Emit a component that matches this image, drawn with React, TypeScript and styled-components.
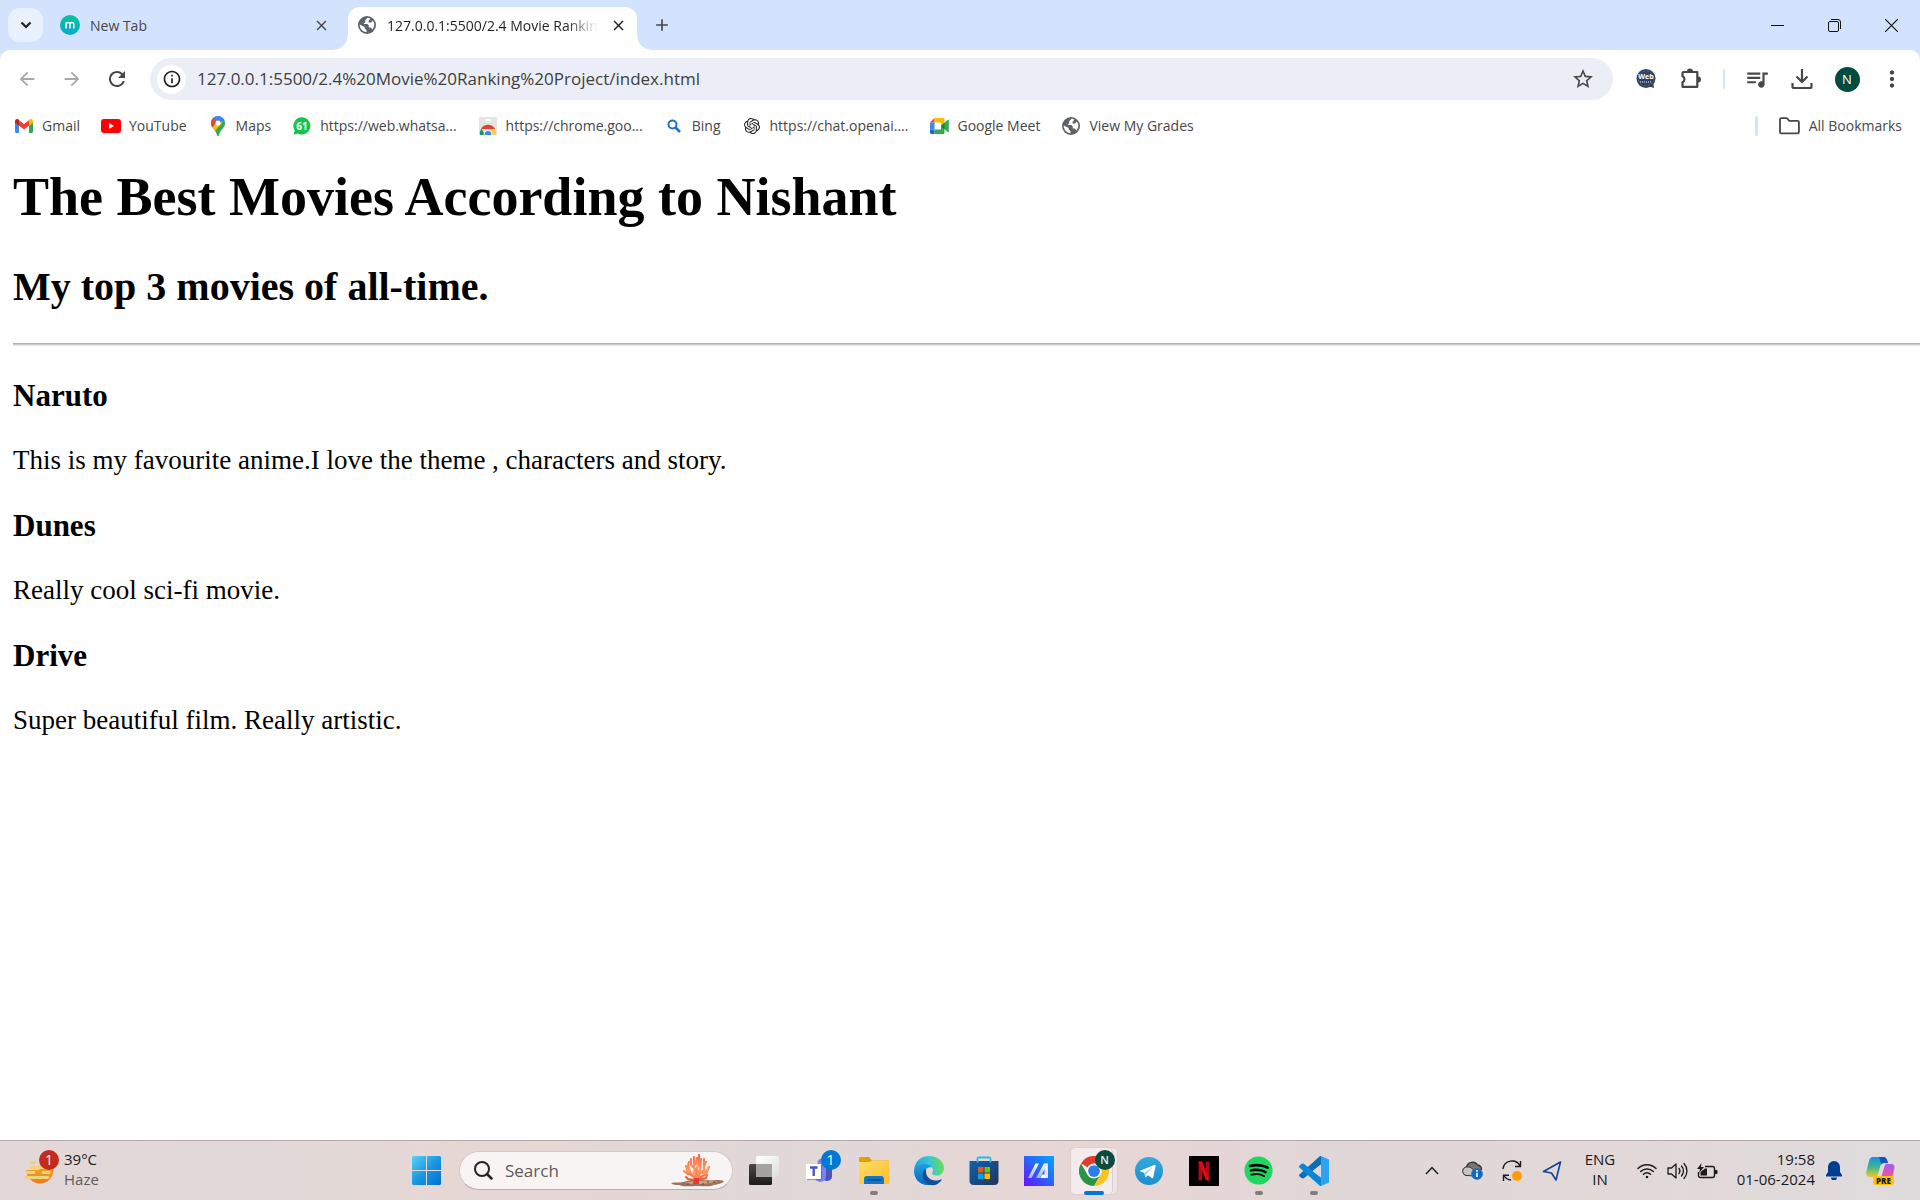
import React from "react";
import styled, { createGlobalStyle, css } from "styled-components";
import {
  MdArrowBack,
  MdArrowForward,
  MdRefresh,
  MdStarBorder,
  MdQueueMusic,
  MdMoreVert,
  MdInfoOutline,
  MdClose,
  MdAdd,
} from "react-icons/md";
import { SiOpenai } from "react-icons/si";
import { FaSpotify } from "react-icons/fa";

const ui = `"Open Sans", "Noto Sans", sans-serif`;
const serif = `"Liberation Serif", "Times New Roman", serif`;

const GlobalStyle = createGlobalStyle`
  * { box-sizing: border-box; }
  body { margin: 0; background: #fff; }
  button, input { font: inherit; color: inherit; }
`;

const Screen = styled.div`
  min-height: 100vh;
  display: flex;
  flex-direction: column;
  overflow-x: hidden;
  font-family: ${ui};
  color: #474747;
`;

const PlainButton = styled.button`
  display: flex;
  align-items: center;
  justify-content: center;
  padding: 0;
  border: 0;
  background: none;
  cursor: default;
  flex: none;
`;

/* ---------- Tab strip ---------- */

const TabStrip = styled.header`
  display: flex;
  align-items: center;
  gap: 8px;
  height: 50px;
  padding-left: 8px;
  background: #d3e3fd;
`;

const TabSearch = styled(PlainButton)`
  width: 35px;
  height: 34px;
  border-radius: 12px;
  background: #e9f1fe;
  color: #1f1f1f;
`;

const Tab = styled.div<{ $active?: boolean }>`
  position: relative;
  display: flex;
  align-items: center;
  gap: 10px;
  width: 289px;
  height: 43px;
  align-self: flex-end;
  padding: 0 9px 7px;
  font-size: 14px;
  color: #474747;
  ${(p) =>
    p.$active &&
    css`
      background: #fff;
      color: #1f1f1f;
      border-radius: 12px 12px 0 0;
      &::before,
      &::after {
        content: "";
        position: absolute;
        bottom: 0;
        width: 14px;
        height: 14px;
      }
      &::before {
        right: 100%;
        background: radial-gradient(circle at 0 0, #d3e3fd 13px, #fff 14px);
      }
      &::after {
        left: 100%;
        background: radial-gradient(circle at 100% 0, #d3e3fd 13px, #fff 14px);
      }
    `}
`;

const TabTitle = styled.span<{ $fade?: boolean }>`
  flex: 1;
  min-width: 0;
  overflow: hidden;
  white-space: nowrap;
  ${(p) => p.$fade && "mask-image: linear-gradient(90deg, #000 85%, transparent);"}
`;

const TabClose = styled(PlainButton)`
  width: 20px;
  height: 20px;
`;

const NewTab = styled(PlainButton)`
  width: 34px;
  height: 34px;
`;

const WindowControls = styled.div`
  display: flex;
  align-self: stretch;
  margin-left: auto;
`;

const WindowButton = styled(PlainButton)`
  width: 57px;
  color: #111;
`;

/* ---------- Toolbar ---------- */

const ToolbarBack = styled.div`
  background: #d3e3fd;
`;

const Toolbar = styled.nav`
  display: flex;
  align-items: center;
  gap: 5px;
  height: 58px;
  padding: 0 8px 0 7px;
  background: #fff;
  border-radius: 10px 10px 0 0;
`;

const ToolButton = styled(PlainButton)<{ $dim?: boolean }>`
  width: 40px;
  height: 40px;
  color: ${(p) => (p.$dim ? "#a9a9a9" : "#474747")};
`;

const Omnibox = styled.div`
  flex: 1;
  min-width: 0;
  display: flex;
  align-items: center;
  height: 42px;
  margin: 0 8px;
  padding: 0 10px 0 7px;
  border-radius: 21px;
  background: #ebeef7;
`;

const SiteInfo = styled(PlainButton)`
  width: 29px;
  height: 29px;
  margin-right: 11px;
  border-radius: 50%;
  background: #fff;
  color: #1f1f1f;
`;

const AddressInput = styled.input`
  flex: 1;
  min-width: 0;
  padding: 0;
  border: 0;
  outline: 0;
  background: transparent;
  font-size: 17px;
  line-height: 24px;
  color: #404040;
`;

const Divider = styled.span<{ $thick?: boolean }>`
  flex: none;
  width: ${(p) => (p.$thick ? 3 : 2)}px;
  height: 20px;
  margin: 0 ${(p) => (p.$thick ? 0 : 7)}px;
  border-radius: 2px;
  background: #d3e3fd;
`;

const Avatar = styled.span`
  display: grid;
  place-items: center;
  width: 25px;
  height: 25px;
  border-radius: 50%;
  background: #004d40;
  color: #fff;
  font-size: 13px;
`;

/* ---------- Bookmarks ---------- */

const BookmarkBar = styled.nav`
  display: flex;
  align-items: center;
  gap: 21px;
  height: 36px;
  padding: 0 18px 0 14px;
`;

const BookmarkLink = styled.a`
  display: flex;
  align-items: center;
  gap: 8px;
  font-size: 14px;
  line-height: 20px;
  color: #474747;
  text-decoration: none;
  white-space: nowrap;
`;

const IconSlot = styled.span`
  display: grid;
  place-items: center;
  width: 20px;
  height: 20px;
  flex: none;
`;

const AllBookmarks = styled(PlainButton)`
  gap: 9px;
  font-size: 14px;
  line-height: 20px;
`;

const Spacer = styled.span`
  flex: 1;
`;

/* ---------- Page ---------- */

const Page = styled.main`
  flex: 1;
  padding: 23px 0 0 13px;
  font-family: ${serif};
  color: #000;
`;

const Title = styled.h1`
  margin: 0 0 36px;
  font-size: 54px;
  line-height: 60px;
`;

const Subtitle = styled.h2`
  margin: 0 0 32px;
  font-size: 40px;
  line-height: 48px;
`;

const Rule = styled.hr`
  height: 3px;
  margin: 0 0 32px;
  border: 0;
  border-top: 1px solid #b0b0b0;
  border-bottom: 1px solid #e9e9e9;
  background: #cecece;
`;

const MovieName = styled.h3`
  margin: 0 0 30px;
  font-size: 31px;
  line-height: 36px;
`;

const MovieText = styled.p`
  margin: 0 0 32px;
  font-size: 27px;
  line-height: 32px;
`;

/* ---------- Taskbar ---------- */

const Taskbar = styled.footer`
  display: flex;
  align-items: center;
  height: 60px;
  border-top: 1px solid #b1a9a9;
  background: linear-gradient(90deg, #e4d7d7, #e0d9d8 12%, #e6d7d4 25%, #e0d8d7 40%, #e8d6d6 58%, #e1d7d7 70%, #e2d8d8 85%, #dfdbdd);
  color: #1b1b1b;
  font-size: 15px;
  line-height: 20px;
`;

const Weather = styled(PlainButton)`
  justify-content: flex-start;
  gap: 10px;
  width: 399px;
  padding-left: 24px;
  text-align: left;
`;

const IconStack = styled.span`
  position: relative;
  display: grid;
`;

const CountBadge = styled.span<{ $color: string; $x: number; $y: number }>`
  position: absolute;
  left: ${(p) => p.$x}px;
  top: ${(p) => p.$y}px;
  display: grid;
  place-items: center;
  width: 20px;
  height: 20px;
  border-radius: 50%;
  background: ${(p) => p.$color};
  color: #fff;
  font-size: 14px;
`;

const Stack = styled.span<{ $align?: string }>`
  display: flex;
  flex-direction: column;
  align-items: ${(p) => p.$align || "flex-start"};
  padding-bottom: 4px;
`;

const Muted = styled.span`
  color: #605a5a;
`;

const AppSlot = styled(PlainButton)`
  position: relative;
  width: 55px;
  height: 48px;
`;

const RunningMark = styled.span<{ $active?: boolean }>`
  position: absolute;
  bottom: 0;
  left: 50%;
  width: ${(p) => (p.$active ? 20 : 8)}px;
  height: 4px;
  margin-left: ${(p) => (p.$active ? -10 : -4)}px;
  border-radius: 2px;
  background: ${(p) => (p.$active ? "#0078d4" : "#857c7c")};
`;

const ActiveCard = styled.span`
  position: relative;
  display: grid;
  place-items: center;
  width: 48px;
  height: 48px;
  border-radius: 5px;
  background: #f0e4e4;
  border: 1px solid #dccfcf;
  &::before {
    content: "";
    position: absolute;
    inset: -1px 4px -1px -1px;
    border-radius: 5px;
    border: 1px solid #dccfcf;
    background: #f4ecec;
  }
  svg {
    position: relative;
  }
`;

const SearchBox = styled.label`
  display: flex;
  align-items: center;
  width: 274px;
  height: 39px;
  margin: 0 3px 0 5px;
  padding: 0 7px 0 14px;
  border: 1px solid #d5c8c6;
  border-bottom-color: #b9adab;
  border-radius: 20px;
  background: #f8f4f3;
`;

const SearchInput = styled.input`
  flex: 1;
  min-width: 0;
  margin-left: 12px;
  padding: 0;
  border: 0;
  outline: 0;
  background: transparent;
  font-size: 17px;
  &::placeholder {
    color: #5f5b5a;
    opacity: 1;
  }
`;

const Tray = styled.div`
  display: flex;
  align-items: center;
  margin-left: auto;
  padding-right: 11px;
`;

const TrayButton = styled(PlainButton)<{ $w: number }>`
  width: ${(p) => p.$w}px;
  height: 48px;
`;

const QuickSettings = styled(PlainButton)`
  height: 48px;
  padding-left: 4px;
`;

const QuickIcon = styled.span`
  display: grid;
  place-items: center;
  width: 30px;
`;

const Clock = styled(PlainButton)`
  width: 93px;
  justify-content: flex-end;
`;

/* ---------- Drawings ---------- */

const MIcon = () => (
  <svg width="20" height="20" viewBox="0 0 20 20">
    <defs>
      <linearGradient id="mg" x1="0" y1="0" x2="0" y2="1">
        <stop offset="0" stopColor="#06c49a" />
        <stop offset="1" stopColor="#08a7d2" />
      </linearGradient>
    </defs>
    <circle cx="10" cy="10" r="10" fill="url(#mg)" />
    <path d="M6.200 13.500V7.300m0 2.200c0-2.600 3.800-2.600 3.800 0v4m0-4c0-2.600 3.800-2.600 3.800 0v4" fill="none" stroke="#fff" strokeWidth="1.500" />
  </svg>
);

const Globe = () => (
  <svg width="18" height="18" viewBox="0 0 18 18">
    <circle cx="9" cy="9" r="9" fill="#5f6368" />
    <path d="M9.600 1.800 7.200 4.300v1.900L5.400 8h4l1.400 1.500v2h1.900l1.800 1.900A7.300 7.300 0 0 0 14.800 4.600l-1.600 2h-2.600V4.800l1.800-2.100a7.300 7.300 0 0 0-2.800-.9z" fill="#fff" />
    <path d="M1.700 8.400A7.300 7.300 0 0 0 8.600 16.300v-2.100l-1.900-1.600v-1.500z" fill="#fff" />
  </svg>
);

const Gmail = () => (
  <svg width="18" height="14" viewBox="0 0 18 14">
    <path d="M0 1.800V12.600c0 .8.500 1.400 1.300 1.400H4V5.800z" fill="#4285f4" />
    <path d="M18 1.800V12.600c0 .8-.5 1.400-1.300 1.400H14V5.800z" fill="#34a853" />
    <path d="M14 1.400v5.400l4-3V2.200C18 .2 15.800-.6 14.400.5z" fill="#fbbc04" />
    <path d="M4 6.800V1.200l5 3.800 5-3.800v5.600l-5 3.800z" fill="#ea4335" />
    <path d="M0 2.200v1.600l4 3V1.200L3.600.5C2.200-.6 0 .2 0 2.200z" fill="#c5221f" />
  </svg>
);

const YouTube = () => (
  <svg width="20" height="14" viewBox="0 0 20 14">
    <rect width="20" height="14" rx="3" fill="#f00" />
    <path d="M8 4v6l5-3z" fill="#fff" />
  </svg>
);

const MapPin = () => (
  <svg width="14" height="20" viewBox="0 0 14 20">
    <defs>
      <clipPath id="pin">
        <path d="M7 0a7 7 0 0 1 7 7c0 5-4.500 6.500-5.800 11.500C8 19.400 7.700 20 7 20s-1-.6-1.200-1.500C4.500 13.500 0 12 0 7a7 7 0 0 1 7-7z" />
      </clipPath>
    </defs>
    <g clipPath="url(#pin)">
      <rect width="14" height="20" fill="#34a853" />
      <path d="M0 13 11 0v7L3 16z" fill="#fbbc04" />
      <path d="M4 0h10v4.500L7 7 2 2z" fill="#4285f4" />
      <path d="M0 2 1.800 1.500 6 5.500 1 11H0z" fill="#ea4335" />
    </g>
    <circle cx="7" cy="7" r="2.600" fill="#fff" />
  </svg>
);

const WhatsApp = () => (
  <svg width="18" height="18" viewBox="0 0 18 18">
    <path d="M9 .3a8.600 8.600 0 1 1-4.200 16.200L.5 17.700l1.200-4.200A8.600 8.600 0 0 1 9 .3z" fill="#16c448" />
    <text x="9" y="12.600" fontSize="10" fontWeight="700" textAnchor="middle" fill="#fff" fontFamily={ui}>61</text>
  </svg>
);

const ChromeMark = ({ size }: { size: number }) => (
  <svg width={size} height={size} viewBox="0 0 48 48">
    <path d="M24 24 3.200 12A24 24 0 0 1 44.800 12z" fill="#e33b2e" />
    <path d="M3.200 12A24 24 0 0 0 24 48l10.400-18L24 24 13.600 30z" fill="#2a9446" />
    <path d="M44.800 12A24 24 0 0 1 24 48l10.400-18A12 12 0 0 0 34 16.500L24 12z" fill="#fcc31e" />
    <circle cx="24" cy="24" r="12" fill="#fff" />
    <circle cx="24" cy="24" r="9.400" fill="#2f7de9" />
  </svg>
);

const WebStore = () => (
  <svg width="18" height="18" viewBox="0 0 18 18">
    <rect width="18" height="18" fill="#e4e4e4" />
    <rect x="6" y="2" width="6" height="2" rx="1" fill="#fff" />
    <path d="M2 12a8 8 0 0 1 14 0z" fill="#db4437" />
    <path d="M1 18a8 8 0 0 1 1.500-6.500L6 18z" fill="#0f9d58" />
    <path d="M9 12h7a8 8 0 0 1 1 6h-5z" fill="#ffcd40" />
    <path d="M4.500 18a4.500 5 0 0 1 9 0z" fill="#fff" />
    <path d="M5.500 18a3.500 4 0 0 1 7 0z" fill="#4285f4" />
  </svg>
);

const BlueSearch = () => (
  <svg width="14" height="14" viewBox="0 0 14 14" fill="none" stroke="#1a73c8" strokeWidth="2">
    <circle cx="5.500" cy="5.500" r="4" />
    <path d="m8.500 8.500 4.500 4.500" strokeWidth="2.500" />
  </svg>
);

const Meet = () => (
  <svg width="19" height="16" viewBox="0 0 19 16">
    <path d="M4.500 0v4.500H0z" fill="#ea4335" />
    <path d="M0 4.500h4.500v7H0z" fill="#4285f4" />
    <path d="M0 11.500h4.500V16H1.500C.6 16 0 15.400 0 14.500z" fill="#1967d2" />
    <path d="M4.500 0H13c.9 0 1.500.6 1.500 1.500V6L11 8V4.500H4.500z" fill="#fbbc04" />
    <path d="M4.500 16H13c.9 0 1.500-.6 1.500-1.500V10L11 8v3.500H4.500z" fill="#34a853" />
    <path d="M11 8l6.500-6c.5-.4 1.300 0 1.300.7v10.600c0 .7-.8 1.100-1.300.7z" fill="#34a853" />
    <path d="m11 8 3.500-3.200v6.400z" fill="#188038" />
  </svg>
);

const WebChat = () => (
  <svg width="20" height="20" viewBox="0 0 20 20">
    <circle cx="10" cy="9.500" r="9.500" fill="#33415f" />
    <path d="m12 17 6 2-1-6z" fill="#33415f" />
    <circle cx="10" cy="9.500" r="7.500" fill="none" stroke="#4f6f8f" strokeWidth="1" strokeDasharray="2 2" />
    <text x="10" y="10" fontSize="7" fontWeight="700" textAnchor="middle" fill="#fff" fontFamily={ui}>Web</text>
    <path d="M4 13h12" stroke="#a9bdd0" strokeWidth="1.500" strokeDasharray="1 1" />
  </svg>
);

const Puzzle = () => (
  <svg width="24" height="24" viewBox="0 0 24 24">
    <path d="M4.500 5h13.800v14.800H3.500v-4.500a3.300 3.300 0 0 0 0-6V6c0-.6.400-1 1-1z" fill="none" stroke="#474747" strokeWidth="2.200" strokeLinejoin="round" />
    <path d="M8 4.500a3 3 0 0 1 6 0zM19 9.400a3 3 0 0 1 0 6z" fill="#474747" />
  </svg>
);

const Folder = () => (
  <svg width="21" height="18" viewBox="0 0 21 18" fill="none" stroke="#474747" strokeWidth="1.800" strokeLinejoin="round">
    <path d="M1 2.500C1 1.700 1.600 1.200 2.300 1.200h5.500l2.500 2.600h8.200c.8 0 1.400.5 1.400 1.300v10c0 .8-.6 1.300-1.400 1.300H2.300c-.7 0-1.300-.5-1.300-1.300z" />
  </svg>
);

const Download = () => (
  <svg width="22" height="22" viewBox="0 0 22 22" fill="none" stroke="#474747" strokeWidth="2.200">
    <path d="M11 1v12.500M5.500 8.500 11 14l5.500-5.500M1.500 15v3.500c0 1 .5 1.500 1.500 1.500h16c1 0 1.500-.5 1.500-1.500V15" />
  </svg>
);

const Haze = () => (
  <svg width="30" height="30" viewBox="0 0 30 30">
    <defs>
      <linearGradient id="sun" x1="0" y1="0" x2="0" y2="1">
        <stop offset="0" stopColor="#f6c02d" />
        <stop offset="1" stopColor="#ef7a1a" />
      </linearGradient>
    </defs>
    <circle cx="16" cy="14" r="13.500" fill="url(#sun)" />
    <path d="M0 0h30v9H16l-1 5H0z" fill="#e3d8d8" />
    <g stroke="#f3d27a" strokeWidth="2.800" strokeLinecap="round">
      <path d="M7 6.500h4M7 11.500h14M3 16.500h7M19 16.500h6M2 21.500h22" />
    </g>
    <path d="M3 19h22" stroke="#d79d2f" strokeWidth="1.800" />
  </svg>
);

const WindowsLogo = () => (
  <svg width="29" height="29" viewBox="0 0 29 29">
    <defs>
      <linearGradient id="win" x1="0" y1="0" x2="29" y2="29" gradientUnits="userSpaceOnUse">
        <stop offset="0" stopColor="#52d3fb" />
        <stop offset=".5" stopColor="#1a98e2" />
        <stop offset="1" stopColor="#0070d0" />
      </linearGradient>
    </defs>
    <path d="M1 0h13v14H0V1zM15 0h13l1 1v13H15zM0 15h14v14H1l-1-1zM15 15h14v13l-1 1H15z" fill="url(#win)" />
  </svg>
);

const Magnifier = () => (
  <svg width="19" height="19" viewBox="0 0 19 19" fill="none" stroke="#252525" strokeWidth="2">
    <circle cx="8" cy="8" r="7" />
    <path d="m13 13 4.500 4.500" strokeWidth="2.500" strokeLinecap="round" />
  </svg>
);

const Coral = () => (
  <svg width="55" height="34" viewBox="0 0 55 34">
    <defs>
      <linearGradient id="coral" x1="0" y1="0" x2="0" y2="28" gradientUnits="userSpaceOnUse">
        <stop offset="0" stopColor="#f06a4e" />
        <stop offset=".6" stopColor="#ff9a5e" />
        <stop offset="1" stopColor="#e8432f" />
      </linearGradient>
    </defs>
    <path d="M1 29c4-1 8 0 12-1 5-1 9-3 15-2 6-1 12 1 17 0 4 0 7 0 9 1-2 3-6 3-10 4-4 2-11 1-16 1-8 0-15 1-19-1-3 0-6 0-8-2z" fill="#9c7360" />
    <path d="M14 29c8-2 20-3 34-2-7 3-22 4-34 2z" fill="#c9a283" />
    <g fill="none" stroke="url(#coral)" strokeWidth="2.200" strokeLinecap="round" strokeLinejoin="round">
      <path d="M26 29V16l-5-5V5M26 16l3-6V1M27 22l7-6V5M26 24l-8-5-2-7M27 25l9-5 3-7M24 14V3M30 18l1-13M21 20l-3-8 1-4M33 19l5-4M18 20l-4-3M26 26l-8-1-2-2M28 26l8-2 1-3M36 8l-2 4M26 10l1-6" />
    </g>
    <path d="M22 19c2-6 6-6 9-1l-2 10h-5z" fill="#ff8a55" opacity=".8" />
    <path d="M24 24h5v6h-6z" fill="#e23a31" />
    <g fill="#523a31">
      <circle cx="18" cy="30" r=".8" /><circle cx="33" cy="30" r=".8" /><circle cx="38" cy="28" r=".8" /><circle cx="44" cy="28" r=".8" />
    </g>
  </svg>
);

const TaskView = () => (
  <svg width="30" height="29" viewBox="0 0 30 29">
    <defs>
      <linearGradient id="tvd" x1="0" y1="0" x2="0" y2="1"><stop offset="0" stopColor="#4a4947" /><stop offset="1" stopColor="#1c1c1c" /></linearGradient>
      <linearGradient id="tvl" x1="0" y1="0" x2="1" y2="1"><stop offset="0" stopColor="#fff" /><stop offset="1" stopColor="#dedede" /></linearGradient>
    </defs>
    <rect x="7" y="0" width="23" height="21" rx="1.500" fill="url(#tvl)" />
    <rect x="0" y="8" width="23" height="21" rx="1.500" fill="url(#tvd)" />
    <rect x="7" y="8" width="16" height="13" fill="#a5a3a2" />
  </svg>
);

const Teams = () => (
  <svg width="30" height="30" viewBox="2 0 30 30" overflow="visible">
    <g transform="translate(4 0)">
      <path d="M17 10h9v10a5 5 0 0 1-9 3z" fill="#4b53bc" />
      <circle cx="16" cy="7" r="4.500" fill="#7b83eb" />
      <path d="M9 11h11v10a6 6 0 0 1-11 2z" fill="#7b83eb" />
      <rect x="1" y="9" width="15" height="15" fill="#4a4fa5" opacity=".5" />
      <rect x="0" y="8" width="15" height="15" fill="#fff" />
      <path d="M4 11.500h7.500M7.700 11.500v8.500" stroke="#4b53bc" strokeWidth="2.300" />
    </g>
  </svg>
);

const Explorer = () => (
  <svg width="30" height="28" viewBox="0 0 30 28">
    <defs>
      <linearGradient id="fold" x1="0" y1="0" x2="1" y2="1"><stop offset="0" stopColor="#ffdc65" /><stop offset="1" stopColor="#fcbf2b" /></linearGradient>
    </defs>
    <path d="M0 1.500C0 .7.500 0 1.500 0H10l3 3.500H30V10H0z" fill="#e0a008" />
    <path d="M0 5h10.500L13 3.500h17V27H1c-.6 0-1-.4-1-1z" fill="url(#fold)" />
    <path d="M5 27v-5a3 3 0 0 1 3-3h14a3 3 0 0 1 3 3v5z" fill="#0f77c6" />
    <path d="M9 23h13" stroke="#0a4d87" strokeWidth="1.300" strokeLinecap="round" />
  </svg>
);

const Edge = () => (
  <svg width="30" height="30" viewBox="0 0 30 30">
    <defs>
      <linearGradient id="e1" x1="0" y1=".4" x2="1" y2=".3"><stop offset="0" stopColor="#279fdf" /><stop offset=".5" stopColor="#38c4d6" /><stop offset="1" stopColor="#6be14c" /></linearGradient>
      <linearGradient id="e2" x1="0" y1="0" x2="0" y2="1"><stop offset="0" stopColor="#1ba0e2" /><stop offset="1" stopColor="#0c62c0" /></linearGradient>
    </defs>
    <path d="M0 14C1 5 7 0 15 0c9 0 15 6 15 12 0 5-3.500 7.500-7 7.500-3 0-5-1-5-2 0-.8 1-1 1-3.500C19 11 15 9 10.500 9 5.500 9 1.500 11 0 14z" fill="url(#e1)" />
    <path d="M0 15c.5-4 5-7 10-7 4 0 6.500 1.500 8 3.500-4-1-7 1.500-7 5.500 0 6 5 10 10 9.500-9 6.500-21 0-21-11.500z" fill="url(#e2)" />
    <path d="M12 12.500c-4 3-4.500 9-1 13 4 5 11.500 5 16-.5.600-.8.800-1.500.5-1.800-.4-.4-2.500 1.300-6 1.300-6 0-10.500-4.500-9.500-12z" fill="#124f96" />
  </svg>
);

const Store = () => (
  <svg width="30" height="30" viewBox="0 0 30 30">
    <defs>
      <linearGradient id="st" x1="0" y1="0" x2="1" y2="1"><stop offset="0" stopColor="#0d64ae" /><stop offset="1" stopColor="#233455" /></linearGradient>
    </defs>
    <path d="M.5 5h29v20c0 2-1.500 4-4 4h-21c-2.500 0-4-2-4-4z" fill="url(#st)" />
    <path d="M8.500 6.500V2.500c0-.6.300-1 1-1h11c.7 0 1 .4 1 1v4" fill="none" stroke="#28b9ec" strokeWidth="1.800" />
    <path d="M9 11h5.500v5.500H9z" fill="#f25022" />
    <path d="M15.500 11H21v5.500h-5.500z" fill="#7fba00" />
    <path d="M9 17.500h5.500V23H9z" fill="#00a4ef" />
    <path d="M15.500 17.500H21V23h-5.500z" fill="#ffb900" />
  </svg>
);

const MyAsus = () => (
  <svg width="30" height="30" viewBox="0 0 30 30">
    <defs>
      <linearGradient id="as" x1="0" y1="1" x2="1" y2="0"><stop offset="0" stopColor="#6a10ff" /><stop offset=".5" stopColor="#2a63fa" /><stop offset="1" stopColor="#02a8ff" /></linearGradient>
      <linearGradient id="bar" x1="0" y1="0" x2="0" y2="1"><stop offset="0" stopColor="#fff" /><stop offset="1" stopColor="#9fb0fb" /></linearGradient>
    </defs>
    <path d="M0 0h30v30H0z" fill="url(#as)" />
    <path d="M11.500 7.500h3.500L7.500 22H4zM20 7.500h3.500L16 22h-4z" fill="url(#bar)" />
    <path d="M20.500 7.500H24V22h-3.500z" fill="#e3edff" />
    <path d="M18 18.500h3V22h-4.500z" fill="#fff" />
  </svg>
);

const Telegram = () => (
  <svg width="28" height="28" viewBox="0 0 28 28">
    <defs><linearGradient id="tg" x1="0" y1="0" x2="0" y2="1"><stop offset="0" stopColor="#33a9de" /><stop offset="1" stopColor="#1c8fd0" /></linearGradient></defs>
    <circle cx="14" cy="14" r="14" fill="url(#tg)" />
    <path d="m5.500 13.600 13.700-5.500c1-.4 1.600.2 1.400 1.200l-2.300 10.900c-.2 1-.8 1.200-1.600.7l-3.700-2.700-1.900 1.800c-.3.3-.6.4-.8-.3l-1.100-4-3.600-1.100c-.8-.2-.8-.7-.1-1z" fill="#fff" />
    <path d="m9.500 15.500 8-5-6.300 6.500-.4 2.800z" fill="#a8cfe8" />
  </svg>
);

const Netflix = () => (
  <svg width="30" height="30" viewBox="0 0 30 30">
    <path d="M0 0h30v30H0z" />
    <path d="M9.500 5.500h3.700V24l-3.700.6zM16.800 5.500h3.700v19l-3.700-.6z" fill="#b00710" />
    <path d="M9.500 5.500h3.700l7.300 19-3.700-.5z" fill="#e50914" />
  </svg>
);

const VsCode = () => (
  <svg width="30" height="30" viewBox="0 0 30 30">
    <path d="M22 0 30 3.500v23L22 30z" fill="#2ba4ee" />
    <path d="M22 0v8.500L4.500 22.500 2.500 22 .4 20.200c-.5-.5-.5-1.200 0-1.600L20.500.5C21 .1 21.500 0 22 0z" fill="#0a6db5" />
    <path d="M22 30v-8.500L4.500 7.500l-2 .3L.4 9.800c-.5.5-.5 1.200 0 1.600l20.100 18.100c.5.4 1 .5 1.500.5z" fill="#0b87d4" />
    <path d="M22 8.500v13L13.500 15z" fill="#e3d8d8" />
  </svg>
);

const Cloud = () => (
  <svg width="21" height="19" viewBox="0 0 21 19">
    <path d="M5 14.500a4.300 4.300 0 0 1-.5-8.400A6 6 0 0 1 15.500 4c3 .3 4 2.500 4 5" fill="#777" stroke="#333" strokeWidth="1.300" />
    <path d="M5 14.500a4.300 4.300 0 0 1 0-8.600c4 0 6 2 9 6l-3 3z" fill="#c9c4c4" stroke="#333" strokeWidth="1" />
    <circle cx="15" cy="13" r="5.800" fill="#0f6cbd" />
    <path d="M15 11.800V16M15 9v1.700" stroke="#fff" strokeWidth="1.600" />
  </svg>
);

const Sync = () => (
  <svg width="22" height="22" viewBox="0 0 22 22" fill="none" stroke="#1b1b1b" strokeWidth="1.400">
    <path d="M2 9A9 9 0 0 1 19 6M19.500 1v5.500H14M10 20a9 9 0 0 1-7-4.500M2.500 21v-5.700H8" />
    <circle cx="16" cy="16" r="5" fill="#ff9a0b" stroke="none" />
  </svg>
);

const Location = () => (
  <svg width="20" height="20" viewBox="0 0 20 20" fill="none" stroke="#0b4596" strokeWidth="1.600" strokeLinejoin="round">
    <path d="M18.500 1 1.500 10.500 9.500 12l4.500 7z" />
  </svg>
);

const Wifi = () => (
  <svg width="20" height="16" viewBox="0 0 20 16" fill="none" stroke="#1b1b1b" strokeWidth="1.500" strokeLinecap="round">
    <path d="M1 5.500a12.500 12.500 0 0 1 18 0M3.700 8.500a9 9 0 0 1 12.600 0M6.500 11.300a5 5 0 0 1 7 0" />
    <circle cx="10" cy="14" r="1.300" fill="#1b1b1b" stroke="none" />
  </svg>
);

const Volume = () => (
  <svg width="21" height="18" viewBox="0 0 21 18" fill="none" stroke="#1b1b1b" strokeWidth="1.300" strokeLinejoin="round" strokeLinecap="round">
    <path d="M1 6h3.500L9 2v14l-4.500-4H1zM12 6.500a4 4 0 0 1 0 5M14.500 4a7.500 7.500 0 0 1 0 10M17 1.500a11 11 0 0 1 0 15" />
  </svg>
);

const Battery = () => (
  <svg width="21" height="16" viewBox="0 0 21 16">
    <path d="M8 3.500h7.500A2 2 0 0 1 17.500 5.500v7a2 2 0 0 1-2 2h-12a2 2 0 0 1-2-2V9" fill="none" stroke="#1b1b1b" strokeWidth="1.400" />
    <path d="M18 7h1.500c.6 0 1 .4 1 1v2c0 .6-.4 1-1 1H18z" fill="#1b1b1b" />
    <path d="M3.500 9 8 5.500h2v7H3.500z" fill="#1b1b1b" />
    <path d="M4.500 0 0 6h3L2 10l5-6H4z" fill="#1b1b1b" />
  </svg>
);

const Bell = () => (
  <svg width="16" height="19" viewBox="0 0 16 19" fill="#003e92">
    <path d="M8 0a6 6 0 0 1 6 6v5l2 3v1.500H0V14l2-3V6a6 6 0 0 1 6-6zM5 16.500h6a3 3 0 0 1-6 0z" />
  </svg>
);

const Copilot = () => (
  <svg width="30" height="28" viewBox="0 0 30 28">
    <defs>
      <linearGradient id="c1" x1="0" y1="0" x2="0" y2="1"><stop offset="0" stopColor="#1a8ff0" /><stop offset=".5" stopColor="#3ab98a" /><stop offset="1" stopColor="#f4c92a" /></linearGradient>
      <linearGradient id="c2" x1="0" y1="0" x2="0" y2="1"><stop offset="0" stopColor="#a65bf0" /><stop offset=".6" stopColor="#f0569c" /><stop offset="1" stopColor="#fb8b52" /></linearGradient>
    </defs>
    <path d="M7 0h10c3 0 4 2 5 6h-4c-2 0-3 1-4 4l-2 7c-.6 2-1.500 3-3 3H4c-3 0-4.500-2-3.500-6L3 4c.6-2.500 2-4 4-4z" fill="url(#c1)" />
    <path d="M13 0h4c3 0 4 2 5 6h-4c-1 0-2 .5-2.700 1.500z" fill="#1454c0" />
    <path d="M20 7h5c3 0 4 2 3.300 5L26 21c-1 4-3 6-6 6h-7l5-16c.6-2 1-4 2-4z" fill="url(#c2)" />
  </svg>
);

const PreBadge = styled.span`
  position: absolute;
  left: 7px;
  top: 19px;
  padding: 0 3px;
  border-radius: 2px;
  background: #fdc20a;
  color: #1b1b1b;
  font-size: 8px;
  font-weight: 800;
  line-height: 9px;
`;

const ProfileBadge = styled.span`
  position: absolute;
  left: 24px;
  top: 2px;
  display: grid;
  place-items: center;
  width: 20px;
  height: 20px;
  border-radius: 50%;
  background: #0b4a3e;
  color: #e8efed;
  font-size: 11px;
  font-weight: 600;
`;

const SpotifyDisc = styled.span`
  display: grid;
  border-radius: 50%;
  background: radial-gradient(circle, #000 60%, transparent 62%);
  color: #1ed760;
`;

/* ---------- Data ---------- */

const bookmarks: { label: string; icon: React.ReactNode }[] = [
  { label: "Gmail", icon: <Gmail /> },
  { label: "YouTube", icon: <YouTube /> },
  { label: "Maps", icon: <MapPin /> },
  { label: "https://web.whatsa...", icon: <WhatsApp /> },
  { label: "https://chrome.goo...", icon: <WebStore /> },
  { label: "Bing", icon: <BlueSearch /> },
  { label: "https://chat.openai....", icon: <SiOpenai size={16} color="#222" /> },
  { label: "Google Meet", icon: <Meet /> },
  { label: "View My Grades", icon: <Globe /> },
];

const movies = [
  { name: "Naruto", text: "This is my favourite anime.I love the theme , characters and story." },
  { name: "Dunes", text: "Really cool sci-fi movie." },
  { name: "Drive", text: "Super beautiful film. Really artistic." },
];

export default function App() {
  return (
    <Screen>
      <GlobalStyle />
      <TabStrip>
        <TabSearch aria-label="Search tabs">
          <svg width="12" height="8" viewBox="0 0 12 8" fill="none" stroke="currentColor" strokeWidth="2.200">
            <path d="m1.500 1.500 4.500 4.500 4.500-4.500" />
          </svg>
        </TabSearch>
        <Tab>
          <IconSlot><MIcon /></IconSlot>
          <TabTitle>New Tab</TabTitle>
          <TabClose aria-label="Close New Tab"><MdClose size={17} /></TabClose>
        </Tab>
        <Tab $active>
          <IconSlot><Globe /></IconSlot>
          <TabTitle $fade>127.0.0.1:5500/2.4 Movie Rankin</TabTitle>
          <TabClose aria-label="Close tab"><MdClose size={17} /></TabClose>
        </Tab>
        <NewTab aria-label="New tab"><MdAdd size={20} /></NewTab>
        <WindowControls>
          <WindowButton aria-label="Minimise">
            <svg width="13" height="13"><path d="M0 6.500h13" stroke="currentColor" /></svg>
          </WindowButton>
          <WindowButton aria-label="Restore">
            <svg width="13" height="13" fill="none" stroke="currentColor">
              <rect x=".5" y="2.500" width="10" height="10" rx="1.500" />
              <path d="M3 .5h7a2.500 2.500 0 0 1 2.500 2.500v7" />
            </svg>
          </WindowButton>
          <WindowButton aria-label="Close window">
            <svg width="13" height="13"><path d="m0 0 13 13M13 0 0 13" stroke="currentColor" strokeWidth="1.200" /></svg>
          </WindowButton>
        </WindowControls>
      </TabStrip>

      <ToolbarBack>
        <Toolbar>
          <ToolButton $dim aria-label="Back"><MdArrowBack size={22} /></ToolButton>
          <ToolButton $dim aria-label="Forward"><MdArrowForward size={22} /></ToolButton>
          <ToolButton aria-label="Reload"><MdRefresh size={24} /></ToolButton>
          <Omnibox>
            <SiteInfo aria-label="Site information"><MdInfoOutline size={20} /></SiteInfo>
            <AddressInput
              aria-label="Address"
              defaultValue="127.0.0.1:5500/2.4%20Movie%20Ranking%20Project/index.html"
            />
            <ToolButton aria-label="Bookmark this page"><MdStarBorder size={24} /></ToolButton>
          </Omnibox>
          <ToolButton aria-label="Web chat"><WebChat /></ToolButton>
          <ToolButton aria-label="Extensions"><Puzzle /></ToolButton>
          <Divider />
          <ToolButton aria-label="Media"><MdQueueMusic size={26} /></ToolButton>
          <ToolButton aria-label="Downloads"><Download /></ToolButton>
          <ToolButton aria-label="Profile"><Avatar>N</Avatar></ToolButton>
          <ToolButton aria-label="Menu"><MdMoreVert size={26} /></ToolButton>
        </Toolbar>
      </ToolbarBack>

      <BookmarkBar>
        {bookmarks.map((b) => (
          <BookmarkLink key={b.label} href="#">
            <IconSlot>{b.icon}</IconSlot>
            {b.label}
          </BookmarkLink>
        ))}
        <Spacer />
        <Divider $thick />
        <AllBookmarks><Folder />All Bookmarks</AllBookmarks>
      </BookmarkBar>

      <Page>
        <Title>The Best Movies According to Nishant</Title>
        <Subtitle>My top 3 movies of all-time.</Subtitle>
        <Rule />
        {movies.map((m) => (
          <section key={m.name}>
            <MovieName>{m.name}</MovieName>
            <MovieText>{m.text}</MovieText>
          </section>
        ))}
      </Page>

      <Taskbar>
        <Weather>
          <IconStack>
            <Haze />
            <CountBadge $color="#c42b1c" $x={15} $y={-6}>1</CountBadge>
          </IconStack>
          <Stack>
            <span>39°C</span>
            <Muted>Haze</Muted>
          </Stack>
        </Weather>
        <AppSlot aria-label="Start"><WindowsLogo /></AppSlot>
        <SearchBox>
          <Magnifier />
          <SearchInput aria-label="Search" placeholder="Search" />
          <Coral />
        </SearchBox>
        <AppSlot aria-label="Task view"><TaskView /></AppSlot>
        <AppSlot aria-label="Teams">
          <IconStack>
            <Teams />
            <CountBadge $color="#0078d4" $x={17} $y={-6}>1</CountBadge>
          </IconStack>
        </AppSlot>
        <AppSlot aria-label="File Explorer"><Explorer /><RunningMark /></AppSlot>
        <AppSlot aria-label="Edge"><Edge /></AppSlot>
        <AppSlot aria-label="Store"><Store /></AppSlot>
        <AppSlot aria-label="MyASUS"><MyAsus /></AppSlot>
        <AppSlot aria-label="Chrome">
          <ActiveCard>
            <ChromeMark size={30} />
            <ProfileBadge>N</ProfileBadge>
          </ActiveCard>
          <RunningMark $active />
        </AppSlot>
        <AppSlot aria-label="Telegram"><Telegram /></AppSlot>
        <AppSlot aria-label="Netflix"><Netflix /></AppSlot>
        <AppSlot aria-label="Spotify"><SpotifyDisc><FaSpotify size={29} /></SpotifyDisc><RunningMark /></AppSlot>
        <AppSlot aria-label="Visual Studio Code"><VsCode /><RunningMark /></AppSlot>
        <Tray>
          <TrayButton $w={40} aria-label="Show hidden icons">
            <svg width="14" height="9" viewBox="0 0 14 9" fill="none" stroke="currentColor" strokeWidth="1.500"><path d="m1 8 6-6.500L13 8" /></svg>
          </TrayButton>
          <TrayButton $w={40} aria-label="OneDrive"><Cloud /></TrayButton>
          <TrayButton $w={40} aria-label="Updates"><Sync /></TrayButton>
          <TrayButton $w={40} aria-label="Location"><Location /></TrayButton>
          <TrayButton $w={56}>
            <Stack $align="center"><span>ENG</span><span>IN</span></Stack>
          </TrayButton>
          <QuickSettings aria-label="Network, volume and battery">
            <QuickIcon><Wifi /></QuickIcon>
            <QuickIcon><Volume /></QuickIcon>
            <QuickIcon><Battery /></QuickIcon>
          </QuickSettings>
          <Clock>
            <Stack $align="flex-end"><span>19:58</span><span>01-06-2024</span></Stack>
          </Clock>
          <TrayButton $w={38} aria-label="Notifications"><Bell /></TrayButton>
          <TrayButton $w={56} aria-label="Copilot">
            <IconStack><Copilot /><PreBadge>PRE</PreBadge></IconStack>
          </TrayButton>
        </Tray>
      </Taskbar>
    </Screen>
  );
}
